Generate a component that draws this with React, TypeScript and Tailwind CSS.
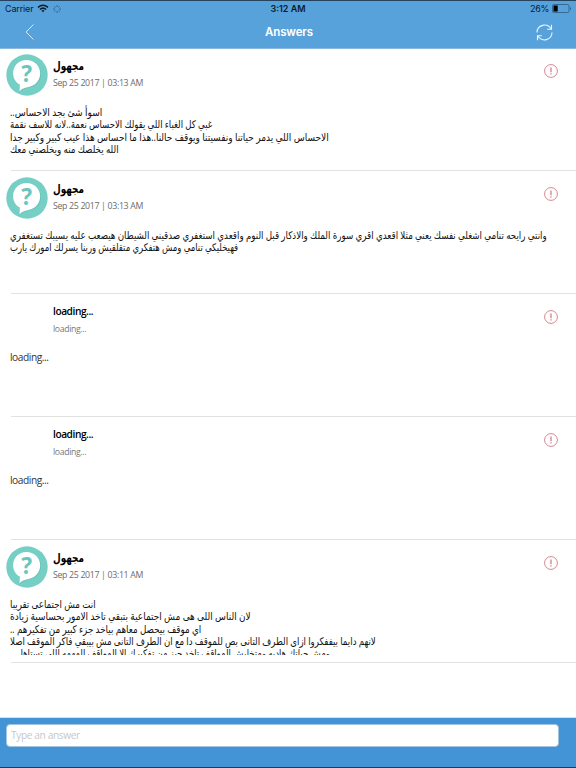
import { useLayoutEffect, useRef } from 'react';
import { clsx } from 'clsx';

type Line = { text: string; width: number };

type Answer = {
  id: number;
  name: string;
  date: string;
  loading?: boolean;
  lines: Line[];
};

const answers: Answer[] = [
  {
    id: 1,
    name: 'مجهول',
    date: 'Sep 25 2017 | 03:13 AM',
    lines: [
      { text: 'اسوأ شئ بجد الاحساس..', width: 92 },
      { text: 'غبي كل الغباء اللي يقولك الاحساس نعمة..لانه للاسف نقمة', width: 202 },
      { text: 'الاحساس اللي يدمر حياتنا ونفسيتنا ويوقف حالنا..هذا ما احساس هذا عيب كبير وكبير جدا', width: 319 },
      { text: 'الله يخلصك منه ويخلصني معك', width: 109 },
    ],
  },
  {
    id: 2,
    name: 'مجهول',
    date: 'Sep 25 2017 | 03:13 AM',
    lines: [
      {
        text: 'وانتي رايحه تنامي اشغلي نفسك يعني مثلا اقعدي اقري سورة الملك والاذكار قبل النوم واقعدي استغفري صدقيني الشيطان هيصعب عليه يسيبك تستغفري',
        width: 537,
      },
      { text: 'فهيخليكي تنامي ومش هتفكري متقلقيش وربنا يسرلك امورك يارب', width: 228 },
    ],
  },
  { id: 3, name: 'loading...', date: 'loading...', loading: true, lines: [] },
  { id: 4, name: 'loading...', date: 'loading...', loading: true, lines: [] },
  {
    id: 5,
    name: 'مجهول',
    date: 'Sep 25 2017 | 03:11 AM',
    lines: [
      { text: 'انت مش اجتماعى تقريبا', width: 86 },
      { text: 'لان الناس اللى هى مش اجتماعية بتبقي تاخد الامور بحساسية زيادة', width: 241 },
      { text: 'اي موقف بيحصل معاهم بياخد جزء كبير من تفكيرهم ..', width: 191 },
      { text: 'لانهم دايما بيففكروا ازاى الطرف التانى بص للموقف دا مع ان الطرف التانى مش بيبقي فاكر الموقف اصلا', width: 366 },
      { text: 'ومش حياتك هاديه ومتخليش المواقف تاخد حيز من تفكيرك الا المواقف المهمه اللى تستاهل ..', width: 320 },
    ],
  },
];

// Arabic glyph widths differ between fonts, so each line is squeezed to its own measure
function FitText({ text, width, className }: Line & { className?: string }) {
  const ref = useRef<HTMLSpanElement>(null);

  useLayoutEffect(() => {
    const el = ref.current;
    if (el) el.style.transform = `scaleX(${width / el.offsetWidth})`;
  }, [width]);

  return (
    <span ref={ref} dir="rtl" className={clsx('block w-max origin-left whitespace-nowrap', className)}>
      {text}
    </span>
  );
}

function Avatar() {
  return (
    <svg viewBox="0 0 42 42" className="h-[42px] w-[42px]">
      <circle cx="21" cy="21" r="20.7" fill="#75cfc5" />
      <path
        d="M21.500 6.800c-7.600 0-13.200 5.800-13.200 13.100 0 5 2.400 9 6.200 11.200l-.4 6.900c2.600-2.600 5-3.800 8.300-4.300C29.900 32.700 35 27.100 35 20 35 12.700 29.100 6.800 21.500 6.800z"
        fill="#4aa99f"
        opacity=".4"
      />
      <path
        d="M20.500 6c-7.600 0-13.400 5.900-13.400 13.200 0 5 2.700 9.200 6.700 11.400l-.2 6.600c2.600-2.600 4.800-3.500 8.100-4 7.500-1.200 12.500-6.900 12.500-14C34.200 11.900 28.100 6 20.500 6z"
        fill="#fff"
      />
      <text x="20.500" y="28" textAnchor="middle" fontFamily="Noto Sans, sans-serif" fontWeight="700" fontSize="22.500" fill="#6ac6bd">
        ?
      </text>
    </svg>
  );
}

function ReportIcon() {
  return (
    <svg viewBox="0 0 14 14" className="h-3.5 w-3.5" fill="none" stroke="#cb6870">
      <circle cx="7" cy="7" r="6.400" strokeWidth=".8" />
      <path d="M7 3.500v4.800M7 9.300v1.200" strokeWidth="1.100" />
    </svg>
  );
}

function AnswerRow({ answer }: { answer: Answer }) {
  return (
    <li className="relative h-[123px] overflow-hidden">
      <div className="flex h-[57px] pt-[6px] pl-1.5">
        <div className="w-[42px] shrink-0">{!answer.loading && <Avatar />}</div>
        <div className="flex-1 pl-[5px]">
          {answer.loading ? (
            <>
              <p className="pt-[3px] text-[10.2px] leading-4 font-semibold tracking-[-0.45px] text-black">{answer.name}</p>
              <p className="mt-[2px] text-[8.7px] leading-4 tracking-[-0.35px] text-[#777]">{answer.date}</p>
            </>
          ) : (
            <>
              <div className="h-[21px] pt-1">
                <FitText text={answer.name} width={31} className="text-[12px] leading-4 font-bold text-black" />
              </div>
              <p className="text-[8.8px] leading-[17px] tracking-[-0.34px] text-[#6c6c6c]">{answer.date}</p>
            </>
          )}
        </div>
        <div className="mr-[18px] pt-[10px]">
          <ReportIcon />
        </div>
      </div>
      <div className="h-[57.5px] overflow-hidden pl-2.5">
        {answer.loading ? (
          <p className="-mt-[2px] text-[10.2px] leading-4 tracking-[-0.45px] text-[#333]">loading...</p>
        ) : (
          <div className="pt-[0.8px]">
            {answer.lines.map((line) => (
              <FitText key={line.text} {...line} className="text-[10.5px] leading-[12.4px] text-[#111]" />
            ))}
          </div>
        )}
      </div>
      <div className="absolute right-0 bottom-0 left-[11px] h-px bg-[#e2e2e2]" />
    </li>
  );
}

export default function App() {
  return (
    <div className="flex h-[768px] w-[576px] flex-col overflow-hidden bg-white font-['Open_Sans','DejaVu_Sans',sans-serif]">
      <header className="h-[49px] shrink-0 border-t border-b border-t-[#24435e] border-b-[#8bb9df] bg-[#58a2dc]">
        <div className="grid h-[15px] grid-cols-3 items-center pr-[5px] pl-[5px] font-[Inter,sans-serif] text-[9px] text-[#0b1b29]">
          <div className="flex items-center">
            <span className="tracking-[-0.15px]">Carrier</span>
            <svg viewBox="0 0 12 9" className="ml-1 h-[9px] w-3" fill="none" stroke="currentColor" strokeWidth="1.600">
              <path d="M1 3.400Q6-.9 11 3.400M2.900 5.500Q6 2.900 9.100 5.500" />
              <path d="M4.500 6.700Q6 5.500 7.500 6.700L6 8.300z" fill="currentColor" stroke="none" />
            </svg>
            <svg viewBox="0 0 8 8" className="ml-1 h-2 w-2" stroke="#28577c" strokeWidth=".8">
              <path d="M4 0v2M4 6v2M0 4h2M6 4h2M1.200 1.200l1.400 1.400M5.400 5.400l1.400 1.400M1.200 6.800l1.400-1.400M5.400 2.600l1.400-1.400" />
            </svg>
          </div>
          <span className="text-center font-semibold">3:12 AM</span>
          <div className="flex items-center justify-end gap-[3px]">
            <span className="tracking-[-0.3px]">26%</span>
            <svg viewBox="0 0 19 9" className="h-[9px] w-[19px]">
              <rect x=".5" y=".5" width="16.500" height="8" rx="1.500" fill="none" stroke="#2c5a80" strokeWidth=".8" />
              <rect x="1.500" y="1.500" width="4.200" height="6" fill="#000" />
              <path d="M18 3v3q1-.5 1-1.500t-1-1.500z" fill="#2c5a80" />
            </svg>
          </div>
        </div>
        <div className="grid h-8 grid-cols-3 items-center pr-[23px] pl-[25px]">
          <svg viewBox="0 0 9 16" className="h-4 w-[9px]" fill="none" stroke="#d7e8f6" strokeWidth="1">
            <path d="M8.500.5 1 8l7.500 7.500" />
          </svg>
          <h1 className="pt-[2px] text-center font-['Inter',sans-serif] text-[11.5px] font-semibold tracking-[-0.15px] text-white">
            Answers
          </h1>
          <svg viewBox="0 0 17 17" className="h-[17px] w-[17px] justify-self-end" fill="none" stroke="#eaf4fb" strokeWidth="1.100">
            <path d="M1 8.500A7.500 7.500 0 0 1 15 4.900M16 8.500A7.500 7.500 0 0 1 2 12.100" />
            <path d="M15.500.8v4.400h-4.400M1.500 16.200v-4.400h4.400" />
          </svg>
        </div>
      </header>

      <ul className="-mt-px flex-1 overflow-hidden">
        {answers.map((answer) => (
          <AnswerRow key={answer.id} answer={answer} />
        ))}
      </ul>

      <footer className="h-[51px] shrink-0 border-t border-b border-t-[#d5e2ed] border-b-[#203c54] bg-[#4294d7] pt-1.5 pl-1.5">
        <input
          type="text"
          placeholder="Type an answer"
          className="block h-[23px] w-[553px] rounded-[4px] border border-[#a3c3df] bg-white px-[4px] pb-[2px] text-[10.2px] tracking-[-0.4px] outline-none placeholder:text-[#c7c7cd]"
        />
      </footer>
    </div>
  );
}
